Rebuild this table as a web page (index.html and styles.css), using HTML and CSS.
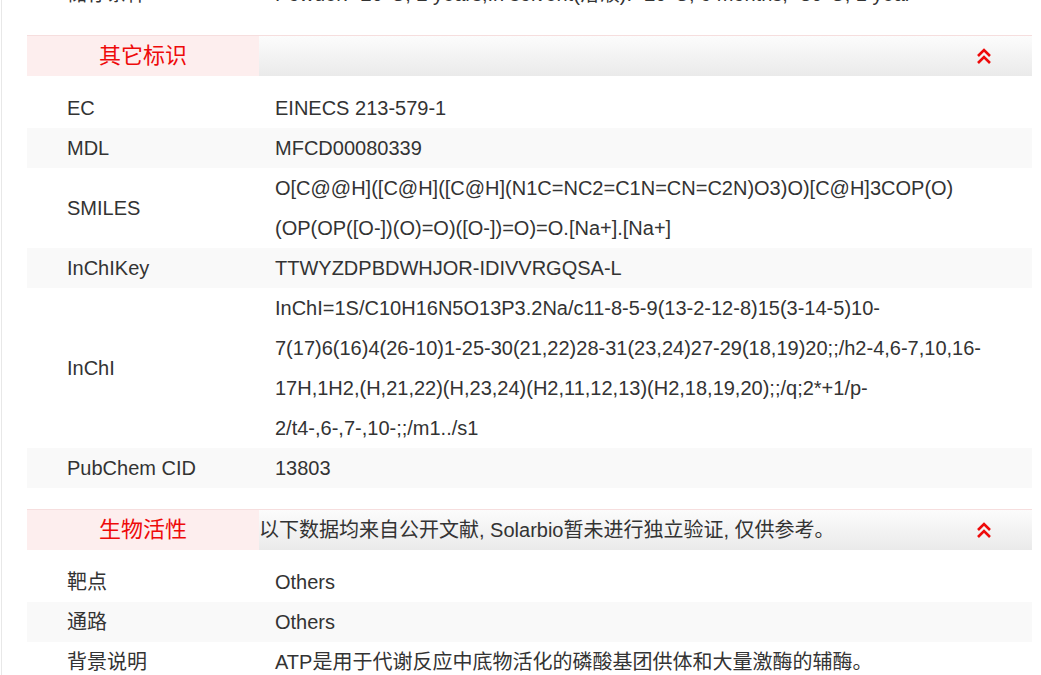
FILE: index.html
```html
<!DOCTYPE html>
<html lang="zh-CN">
<head>
<meta charset="utf-8">
<title>产品信息</title>
<link rel="stylesheet" href="styles.css">
</head>
<body>
<div class="page">
  <div class="rows rows-prev">
    <div class="row"><div class="label">储存条件</div><div class="value">Powder: -20°C, 2 years;In solvent(溶液): -20°C, 6 months; -80°C, 1 year</div></div>
  </div>

  <section class="section">
    <div class="sec-head">
      <div class="sec-title">其它标识</div>
      <div class="sec-note"></div>
      <svg class="chev" viewBox="0 0 16 16" width="16" height="16" aria-hidden="true"><polyline points="2,8 8,2 14,8"/><polyline points="2,15 8,9 14,15"/></svg>
    </div>
    <div class="rows">
      <div class="row"><div class="label">EC</div><div class="value">EINECS 213-579-1</div></div>
      <div class="row"><div class="label">MDL</div><div class="value">MFCD00080339</div></div>
      <div class="row"><div class="label">SMILES</div><div class="value">O[C@@H]([C@H]([C@H](N1C=NC2=C1N=CN=C2N)O3)O)[C@H]3COP(O)<br>(OP(OP([O-])(O)=O)([O-])=O)=O.[Na+].[Na+]</div></div>
      <div class="row"><div class="label">InChIKey</div><div class="value">TTWYZDPBDWHJOR-IDIVVRGQSA-L</div></div>
      <div class="row"><div class="label">InChI</div><div class="value">InChI=1S/C10H16N5O13P3.2Na/c11-8-5-9(13-2-12-8)15(3-14-5)10-<br>7(17)6(16)4(26-10)1-25-30(21,22)28-31(23,24)27-29(18,19)20;;/h2-4,6-7,10,16-<br>17H,1H2,(H,21,22)(H,23,24)(H2,11,12,13)(H2,18,19,20);;/q;2*+1/p-<br>2/t4-,6-,7-,10-;;/m1../s1</div></div>
      <div class="row"><div class="label">PubChem CID</div><div class="value">13803</div></div>
    </div>
  </section>

  <section class="section">
    <div class="sec-head">
      <div class="sec-title">生物活性</div>
      <div class="sec-note">以下数据均来自公开文献, Solarbio暂未进行独立验证, 仅供参考。</div>
      <svg class="chev" viewBox="0 0 16 16" width="16" height="16" aria-hidden="true"><polyline points="2,8 8,2 14,8"/><polyline points="2,15 8,9 14,15"/></svg>
    </div>
    <div class="rows">
      <div class="row"><div class="label">靶点</div><div class="value">Others</div></div>
      <div class="row"><div class="label">通路</div><div class="value">Others</div></div>
      <div class="row"><div class="label">背景说明</div><div class="value">ATP是用于代谢反应中底物活化的磷酸基团供体和大量激酶的辅酶。</div></div>
    </div>
  </section>
</div>
</body>
</html>
```

FILE: styles.css
```css
html, body {
  margin: 0;
  padding: 0;
  background: #fff;
}

body {
  font-family: "Liberation Sans", Arial, "Noto Sans CJK SC", sans-serif;
  color: #333;
  overflow: hidden;
}

.page {
  margin-left: 1px;
  margin-top: -26px;
  border-left: 1px solid #e8e8e8;
  padding-left: 25px;
  width: 1005px;
  min-height: 760px;
}

.rows {
  display: flex;
  flex-direction: column;
  margin: 12px 0 21px;
}

.rows-prev {
  margin-top: 0;
}

.row {
  display: grid;
  grid-template-columns: 248px 1fr;
  align-items: center;
  font-size: 20px;
  line-height: 40px;
}

.row:nth-child(even) {
  background: #f9f9f9;
}

.label {
  padding-left: 40px;
}

.value {
  white-space: nowrap;
}

.sec-head {
  display: flex;
  align-items: center;
  height: 40px;
  border-top: 1px solid #f6dede;
  background: linear-gradient(#fcfcfc, #eaeaea);
}

.sec-title {
  width: 232px;
  height: 40px;
  flex: none;
  background: #fdeeee;
  color: #ee0a0a;
  font-size: 22px;
  line-height: 40px;
  text-align: center;
}

.sec-note {
  flex: 1;
  font-size: 20px;
  line-height: 40px;
  color: #333;
  white-space: nowrap;
}

.chev {
  flex: none;
  margin-right: 40px;
  fill: none;
  stroke: #ee0a0a;
  stroke-width: 2.6;
  stroke-linecap: butt;
  stroke-linejoin: miter;
}
```
